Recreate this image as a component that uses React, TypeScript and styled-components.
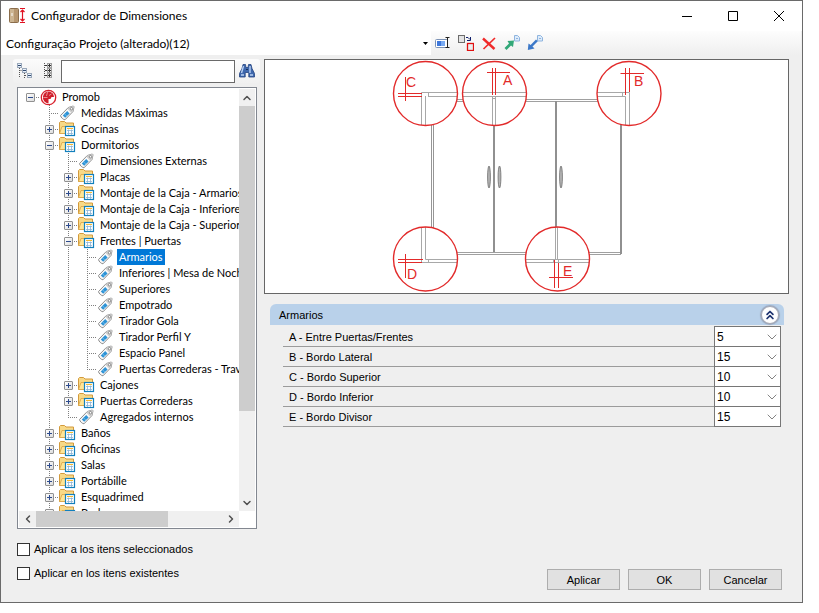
import React, { useState } from "react";
import styled, { createGlobalStyle, css } from "styled-components";
import { ChevronDown, ChevronLeft, ChevronRight, ChevronUp, ChevronsUp } from "lucide-react";

const GlobalStyle = createGlobalStyle`
  * { box-sizing: border-box; }
  body { margin: 0; background: #ffffff; }
  body, button, input, select { font-family: "Liberation Sans", Arial, sans-serif; font-size: 11px; color: #000000; }
  button { cursor: default; }
`;

/* ---------- window frame ---------- */

const Window = styled.div`
  display: flex;
  flex-direction: column;
  height: calc(100vh - 10px);
  min-height: 420px;
  margin-right: 16px;
  border: 1px solid #6a6a6a;
  background: #efefef;
`;

const TitleBar = styled.header`
  display: flex;
  align-items: center;
  height: 30px;
  padding-left: 8px;
  background: #ffffff;
`;

const Title = styled.h1`
  flex: 1;
  margin: 0 0 0 5px;
  font: 400 12px/16px Lato, "Noto Sans", sans-serif;
`;

const CaptionButton = styled.button`
  display: grid;
  place-items: center;
  width: 46px;
  height: 28px;
  padding: 0;
  border: 0;
  background: transparent;
`;

const TopBar = styled.div`
  display: flex;
  align-items: center;
  height: 24px;
  margin-right: 1px;
  background: linear-gradient(#fdfdfd, #efefef);
`;

const ProfileBox = styled.div`
  display: grid;
  flex: 0 0 430px;
  align-items: center;
  height: 24px;
  background: #ffffff;
  > * { grid-area: 1 / 1; }
  > svg { justify-self: end; margin-right: 3px; pointer-events: none; }
`;

const ProfileSelect = styled.select`
  width: 100%;
  height: 24px;
  padding: 0 5px;
  border: 0;
  appearance: none;
  background: transparent;
  font-family: Lato, "Noto Sans", sans-serif;
  font-size: 12px;
`;

const ToolButton = styled.button`
  display: grid;
  place-items: center;
  width: 23px;
  height: 22px;
  padding: 0;
  border: 0;
  background: transparent;
`;

const Body = styled.main`
  display: flex;
  flex: 1;
  min-height: 0;
  padding-top: 4px;
`;

/* ---------- left side ---------- */

const Side = styled.section`
  display: flex;
  flex: 0 0 259px;
  flex-direction: column;
  min-height: 0;
  padding-left: 12px;
`;

const SearchBar = styled.div`
  display: flex;
  align-items: center;
  height: 24px;
  padding-right: 2px;
  background: linear-gradient(#fbfbfb, #f0f0f0);
  border-radius: 3px;
`;

const SearchInput = styled.input`
  flex: 1;
  min-width: 0;
  height: 23px;
  margin-left: 2px;
  border: 1px solid #6a6a6a;
  background: #ffffff;
`;

const TreeBox = styled.div`
  display: grid;
  flex: 1;
  grid-template: minmax(0, 1fr) 16px / minmax(0, 1fr) 16px;
  min-height: 0;
  margin: 4px 3px 8px 4px;
  padding: 1px;
  border: 1px solid #828790;
  background: #ffffff;
`;

const TreeList = styled.ul`
  margin: 0;
  padding: 0 0 0 2px;
  overflow: hidden;
  list-style: none;
`;

const TreeRow = styled.li`
  display: flex;
  height: 16px;
`;

type Guide = "none" | "through" | "tee" | "end" | "stub";

const dotsDown = "repeating-linear-gradient(to bottom, #808080 0 1px, transparent 1px 2px)";
const dotsAcross = "repeating-linear-gradient(to right, #808080 0 1px, transparent 1px 2px)";

const guideStyles = {
  none: css``,
  through: css`background: ${dotsDown} 9px 0 / 1px 16px no-repeat;`,
  tee: css`background: ${dotsDown} 9px 0 / 1px 16px no-repeat, ${dotsAcross} 9px 8px / 10px 1px no-repeat;`,
  end: css`background: ${dotsDown} 9px 0 / 1px 9px no-repeat, ${dotsAcross} 9px 8px / 10px 1px no-repeat;`,
  stub: css`background: ${dotsAcross} 9px 8px / 10px 1px no-repeat;`,
};

const GuideCell = styled.span<{ $guide: Guide }>`
  display: grid;
  flex: 0 0 19px;
  place-items: center;
  height: 16px;
  ${({ $guide }) => guideStyles[$guide]}
`;

const Expander = styled.button`
  display: grid;
  place-items: center;
  width: 9px;
  height: 9px;
  margin-top: 1px;
  padding: 0;
  border: 1px solid #919191;
  border-radius: 1px;
  background: linear-gradient(135deg, #ffffff, #dcdcdc);
`;

const IconCell = styled.span`
  display: grid;
  flex: 0 0 20px;
  align-items: center;
  justify-items: start;
  height: 16px;
`;

const NodeLabel = styled.button<{ $selected: boolean }>`
  height: 16px;
  padding: 0 2px;
  border: 0;
  font-family: Lato, "Liberation Sans", sans-serif;
  font-size: 11px;
  line-height: 16px;
  white-space: nowrap;
  background: ${({ $selected }) => ($selected ? "#0078d7" : "transparent")};
  color: ${({ $selected }) => ($selected ? "#ffffff" : "#000000")};
`;

const ScrollTrack = styled.div<{ $vertical?: boolean }>`
  display: flex;
  flex-direction: ${({ $vertical }) => ($vertical ? "column" : "row")};
  background: #f0f0f0;
`;

const ScrollArrow = styled.button`
  display: grid;
  flex: 0 0 17px;
  place-items: center;
  padding: 0;
  border: 0;
  background: transparent;
  color: #505050;
`;

const ScrollLane = styled.div<{ $vertical?: boolean }>`
  flex: 1;
  display: grid;
  grid-template: ${({ $vertical }) => ($vertical ? "305fr 83fr / 1fr" : "1fr / 71fr 29fr")};
`;

const ScrollThumb = styled.div`
  background: #cdcdcd;
`;

const CheckRow = styled.label`
  display: flex;
  align-items: center;
  gap: 4px;
  height: 24px;
  margin-left: 4px;
`;

const CheckBox = styled.input`
  appearance: none;
  width: 13px;
  height: 13px;
  margin: 0;
  border: 1px solid #333333;
  background: #ffffff;
  &:checked { background: #0078d7; }
`;

const SideFoot = styled.div`
  padding-bottom: 17px;
`;

/* ---------- right side ---------- */

const Detail = styled.section`
  display: flex;
  flex: 1;
  flex-direction: column;
  min-width: 0;
  padding: 0 13px 12px 4px;
`;

const Preview = styled.div`
  display: grid;
  justify-items: center;
  border: 1px solid #666666;
  background: #ffffff;
`;

const GroupHeader = styled.div`
  display: flex;
  align-items: center;
  justify-content: space-between;
  height: 21px;
  margin: 10px 5px 2px 6px;
  padding: 0 5px 0 9px;
  border-radius: 6px 6px 0 0;
  background: #b9d1ea;
`;

const GroupTitle = styled.h2`
  margin: 0;
  font-size: 11px;
  font-weight: 400;
`;

const CollapseButton = styled.button`
  display: grid;
  place-items: center;
  width: 18px;
  height: 18px;
  padding: 0;
  border: 1px solid #a5a8b4;
  border-radius: 50%;
  background: #ffffff;
  box-shadow: 0 0 1px 1px #9aa7bd;
  color: #1f3470;
`;

const Fields = styled.div`
  margin: 0 8px 0 19px;
`;

const FieldRow = styled.div`
  display: flex;
  height: 20px;
`;

const FieldLabel = styled.label`
  flex: 1;
  padding-left: 6px;
  border-bottom: 1px solid #9b9b9b;
  line-height: 20px;
`;

const ValueBox = styled.div`
  display: grid;
  flex: 0 0 67px;
  align-items: center;
  height: 21px;
  margin-top: -1px;
  > * { grid-area: 1 / 1; }
  > svg { justify-self: end; margin-right: 1px; color: #444444; pointer-events: none; }
`;

const ValueSelect = styled.select`
  width: 100%;
  height: 21px;
  padding: 0 2px;
  border: 1px solid #767676;
  border-radius: 0;
  appearance: none;
  background: #ffffff;
  font-size: 12px;
`;

const Actions = styled.div`
  display: flex;
  justify-content: flex-end;
  gap: 8px;
  margin: auto 7px 0 0;
`;

const ActionButton = styled.button`
  width: 73px;
  height: 21px;
  padding: 0;
  border: 1px solid #adadad;
  background: #e1e1e1;
`;

/* ---------- icons ---------- */

const AppIcon = () => (
  <svg width="17" height="16" viewBox="0 0 17 16" aria-hidden="true">
    <rect x="0.5" y="0.5" width="9" height="14" rx="1" fill="#b79871" stroke="#8a6d4b" />
    <rect x="1" y="1" width="4" height="13" fill="#ccb592" />
    <path d="M3 5v3" stroke="#ffffff" />
    <path d="M11 .5h5M11 14.5h5M13.5 2v11M11.5 4l2-2 2 2M11.5 11l2 2 2-2" fill="none" stroke="#e01020" strokeWidth="1.2" />
  </svg>
);

const RenameIcon = () => (
  <svg width="16" height="14" viewBox="0 0 16 14" aria-hidden="true">
    <rect x=".5" y="3.5" width="12" height="8" rx="1" fill="#ffffff" stroke="#7d93b5" />
    <path d="M2 5h8v5H2z" fill="#78aaf2" />
    <path d="M2 5h4v5H2z" fill="#3f78dc" />
    <path d="M10.500 1.500h4M12.500 2v9M10.500 11.500h4" fill="none" stroke="#222222" />
  </svg>
);

const ReplaceIcon = () => (
  <svg width="16" height="16" viewBox="0 0 16 16" aria-hidden="true">
    <rect x=".5" y=".5" width="6" height="7" fill="#e4e4e4" stroke="#6c6c6c" />
    <rect x="9.500" y="8.500" width="6" height="7" fill="#e9f0f0" stroke="#e01010" strokeWidth="1.300" />
    <path d="M8 2.500h2l2 2M12.500 2v3.500H9" fill="none" stroke="#10206c" />
  </svg>
);

const DeleteIcon = () => (
  <svg width="14" height="13" viewBox="0 0 14 13" aria-hidden="true">
    <path d="M1 1.500 12.500 12" stroke="#f02a2a" strokeWidth="2.400" />
    <path d="M13 1 1.500 12" stroke="#f02a2a" strokeWidth="1.700" />
  </svg>
);

const TransferIcon = ({ outward }: { outward: boolean }) => (
  <svg width="16" height="16" viewBox="0 0 16 16" aria-hidden="true">
    <path d="M10.500 .5h3l2 2v3.500h-5z" fill="#dcebfb" stroke="#8fb4de" />
    <path d="M12 3.500h2" stroke="#8fb4de" />
    {outward ? (
      <path d="M.5 13 5 8.500 3.500 6l6.500-.500-1 6.500-2-1.500L2.500 15z" fill="#32a878" />
    ) : (
      <path d="M9 4.500 10.800 6.300 5.500 11.500 7.500 13.500 .8 15 1.500 8.500 3.600 10z" fill="#3c78c8" />
    )}
  </svg>
);

const TreeCollapseIcon = () => (
  <svg width="16" height="16" viewBox="0 0 16 16" aria-hidden="true">
    <path d="M2.500 5v10M2.500 7.500h3M7.500 10v5M8 12.500h3" stroke="#555555" strokeDasharray="1 1" />
    <g fill="#e7f0fa" stroke="#9aa8ba">
      <rect x=".5" y=".5" width="4" height="4" />
      <rect x="5.500" y="5.500" width="4" height="4" />
      <rect x="10.500" y="10.500" width="4" height="4" />
    </g>
    <path d="M1 2.500h3M6 7.500h3M11 12.500h3" stroke="#304a70" />
  </svg>
);

const TreeExpandIcon = () => (
  <svg width="10" height="16" viewBox="0 0 10 16" aria-hidden="true">
    <path d="M1.500 0v16M6.500 0v16" stroke="#555555" strokeDasharray="1 1" />
    {[0, 5, 10].map((y) => (
      <g key={y}>
        <rect x="4.500" y={y + 0.5} width="4" height="4" fill="#eeeeee" stroke="#a0a0a0" />
        <path d={`M5 ${y + 2.5}h3M6.500 ${y + 1}v3M2 ${y + 2.5}h2`} stroke="#333333" />
      </g>
    ))}
  </svg>
);

const BinocularsIcon = () => (
  <svg width="16" height="14" viewBox="0 0 16 14" aria-hidden="true">
    <path d="M4 .5h2.500l.5 3h2l.5-3H12l1 4 2.500 5v3.500H9.800V8.500H6.200V13H.5V9.500L3 4.500z" fill="#3f68ad" stroke="#244480" strokeWidth=".8" />
    <path d="M4.500 2 2.500 9M11 2v7M2 11h3M11 11h3" stroke="#b8d0f2" strokeWidth="1.400" />
    <path d="M7 5.500h2" stroke="#16305f" />
  </svg>
);

const PromobIcon = () => (
  <svg width="17" height="17" viewBox="0 0 17 17" aria-hidden="true">
    <circle cx="8.500" cy="8.500" r="7.200" fill="#ffffff" stroke="#d8202c" strokeWidth="1.300" />
    <path d="M9 2.500a6 6 0 0 1 5 5.500h-2.500l-1 2H8.500v4.500a6 6 0 0 1-5.500-7A6.200 6.200 0 0 1 9 2.500z" fill="#cf1f2c" />
    <path d="M7.500 3 6.500 7M3.500 8.500h4M9 6.500l2.500-1.500" stroke="#f3a8ac" strokeWidth=".8" />
  </svg>
);

const TagIcon = () => (
  <svg width="17" height="16" viewBox="0 0 17 16" aria-hidden="true">
    <path d="M1.500 10.500 9.300 2.500 14.300 1l.7.8-1 4.700-8 8.300c-1.500 0-4.300-2.300-4.500-4.300z" fill="#f8f8f8" stroke="#8c8c8c" />
    <path d="m10 2.300 4.300-1.300.7.800-1 4.700-1.500 1.500-4-4.300z" fill="#cdcdcd" />
    <circle cx="12.500" cy="3.700" r="1.200" fill="#ffffff" stroke="#777777" strokeWidth=".8" />
    <path d="m3.800 10.500 4.400-4.400 2.400 2.300-4.400 4.400z" fill="#2d93d6" />
    <path d="m5.500 8.800 2.400 2.400" stroke="#8cc8ee" strokeWidth=".7" />
  </svg>
);

const FolderIcon = () => (
  <svg width="17" height="16" viewBox="0 0 17 16" aria-hidden="true">
    <path d="M.5 12.500V1.500l1-1h4l1.500 1.500h7.500v10.500z" fill="#f8d987" stroke="#d39a3c" />
    <path d="M.5 12.500 3 5.500h11.500v7z" fill="#ffe596" stroke="#d8a548" strokeWidth=".8" />
    <rect x="6.500" y="5.500" width="9" height="9" fill="#ffffff" stroke="#1380bd" strokeWidth="1.200" />
    <path d="M8 7.500h6" stroke="#f5b82e" />
    <path d="M8 9.500h6M8 12.500h6M9.500 8.500v5.500M12.500 8.500v5.500" stroke="#8db4d4" strokeWidth=".8" />
  </svg>
);

const ExpandSign = ({ open }: { open: boolean }) => (
  <svg width="7" height="7" viewBox="0 0 7 7" aria-hidden="true">
    <path d={open ? "M1 3.500h5" : "M1 3.500h5M3.500 1v5"} stroke="#2c4a8c" />
  </svg>
);

/* ---------- wardrobe drawing ---------- */

const RED = "#e22a2a";

const callouts = [
  { x: 425.5, y: 93.5 },
  { x: 494.5, y: 93.5 },
  { x: 629, y: 93.5 },
  { x: 425.5, y: 259 },
  { x: 557.5, y: 259 },
];

const calloutLetters = [
  { text: "C", x: 406, y: 87 },
  { text: "A", x: 503, y: 85 },
  { text: "B", x: 634, y: 86 },
  { text: "D", x: 407, y: 279 },
  { text: "E", x: 563, y: 276 },
];

const WardrobeDrawing = () => (
  <svg width="271" height="233" viewBox="391 60 271 233" role="img" aria-label="Armario">
    <g fill="none">
      <path d="M430 99.500H622M430 101.500H622M430 252.500H621M430 254.500H621" stroke="#a0a0a0" />
      <path d="M431.500 101V253M433.500 101V253" stroke="#969696" />
      <path d="M494 101V252M556 101V252M621 101V254" stroke="#909090" strokeWidth="2" />
    </g>
    <g fill="#b5b5b5" stroke="#6c6c6c" strokeWidth=".8">
      <ellipse cx="489" cy="177" rx="1.400" ry="11" />
      <ellipse cx="499.500" cy="177" rx="1.400" ry="11" />
      <ellipse cx="561" cy="177" rx="1.400" ry="11" />
    </g>
    <g fill="#ffffff">
      {callouts.map((c) => (
        <circle key={`${c.x}-${c.y}`} cx={c.x} cy={c.y} r="32" />
      ))}
    </g>
    <g fill="none" stroke="#a8a8a8">
      <path d="M457 92.500H421.500V125M457 96.500H428M425.500 96V125M428.500 93v3" />
      <path d="M462.500 92.500H526.500M462.500 96.500H526.500M492.500 97v28M495.500 97v28M492.500 98.500h3" />
      <path d="M597 92.500H629.500V125M597 96.500H625.500V125M622.500 93v3" />
      <path d="M421.500 227V262.500H457M425.500 227V259.500H457M428.500 260v3" />
      <path d="M526 259.500H589.500M526 262.500H589.500M555.500 227V259M557.500 227V259M553.500 260v3M558.500 260v3" />
    </g>
    <g fill="none" stroke={RED}>
      <path d="M398 93.500H422M398 96.500H422M405.500 77V101" />
      <path d="M492.500 68V95M495.500 68V95M487 72.500H510" />
      <path d="M625.500 68V95M629.500 68V92M620.500 73.500H644" />
      <path d="M398 259.500H423M398 262.500H422M405.500 254V278" />
      <path d="M554.500 260V288M558.500 263V288M549 277.500H573" />
    </g>
    <g fill="none" stroke={RED} strokeWidth="1.400">
      {callouts.map((c) => (
        <circle key={`${c.x}-${c.y}`} cx={c.x} cy={c.y} r="32" />
      ))}
    </g>
    <g fill={RED} fontFamily="Liberation Sans, Arial, sans-serif" fontSize="14">
      {calloutLetters.map((l) => (
        <text key={l.text} x={l.x} y={l.y}>{l.text}</text>
      ))}
    </g>
  </svg>
);

/* ---------- data ---------- */

type Node = { label: string; guides: Guide[]; kind: "root" | "tag" | "folder"; open?: boolean };

const nodes: Node[] = [
  { label: "Promob", guides: ["stub"], kind: "root", open: true },
  { label: "Medidas Máximas", guides: ["none", "tee"], kind: "tag" },
  { label: "Cocinas", guides: ["none", "tee"], kind: "folder" },
  { label: "Dormitorios", guides: ["none", "tee"], kind: "folder", open: true },
  { label: "Dimensiones Externas", guides: ["none", "through", "tee"], kind: "tag" },
  { label: "Placas", guides: ["none", "through", "tee"], kind: "folder" },
  { label: "Montaje de la Caja - Armarios", guides: ["none", "through", "tee"], kind: "folder" },
  { label: "Montaje de la Caja - Inferiores", guides: ["none", "through", "tee"], kind: "folder" },
  { label: "Montaje de la Caja - Superior", guides: ["none", "through", "tee"], kind: "folder" },
  { label: "Frentes | Puertas", guides: ["none", "through", "tee"], kind: "folder", open: true },
  { label: "Armarios", guides: ["none", "through", "through", "tee"], kind: "tag" },
  { label: "Inferiores | Mesa de Noche", guides: ["none", "through", "through", "tee"], kind: "tag" },
  { label: "Superiores", guides: ["none", "through", "through", "tee"], kind: "tag" },
  { label: "Empotrado", guides: ["none", "through", "through", "tee"], kind: "tag" },
  { label: "Tirador Gola", guides: ["none", "through", "through", "tee"], kind: "tag" },
  { label: "Tirador Perfil Y", guides: ["none", "through", "through", "tee"], kind: "tag" },
  { label: "Espacio Panel", guides: ["none", "through", "through", "tee"], kind: "tag" },
  { label: "Puertas Correderas - Trav", guides: ["none", "through", "through", "end"], kind: "tag" },
  { label: "Cajones", guides: ["none", "through", "tee"], kind: "folder" },
  { label: "Puertas Correderas", guides: ["none", "through", "tee"], kind: "folder" },
  { label: "Agregados internos", guides: ["none", "through", "end"], kind: "tag" },
  { label: "Baños", guides: ["none", "tee"], kind: "folder" },
  { label: "Oficinas", guides: ["none", "tee"], kind: "folder" },
  { label: "Salas", guides: ["none", "tee"], kind: "folder" },
  { label: "Portábille", guides: ["none", "tee"], kind: "folder" },
  { label: "Esquadrimed", guides: ["none", "tee"], kind: "folder" },
  { label: "Bodegas", guides: ["none", "tee"], kind: "folder" },
];

const fields = [
  { id: "a", label: "A - Entre Puertas/Frentes", value: "5" },
  { id: "b", label: "B - Bordo Lateral", value: "15" },
  { id: "c", label: "C - Bordo Superior", value: "10" },
  { id: "d", label: "D - Bordo Inferior", value: "10" },
  { id: "e", label: "E - Bordo Divisor", value: "15" },
];

const nodeIcons = { root: PromobIcon, tag: TagIcon, folder: FolderIcon };

export default function App() {
  const [selected, setSelected] = useState("Armarios");
  const [collapsed, setCollapsed] = useState(false);

  return (
    <>
      <GlobalStyle />
      <Window>
        <TitleBar>
          <AppIcon />
          <Title>Configurador de Dimensiones</Title>
          <CaptionButton aria-label="Minimizar">
            <svg width="10" height="10" viewBox="0 0 10 10"><path d="M0 5.500h10" stroke="#000000" /></svg>
          </CaptionButton>
          <CaptionButton aria-label="Maximizar">
            <svg width="10" height="10" viewBox="0 0 10 10"><path d="M.5.5h9v9h-9z" fill="none" stroke="#000000" /></svg>
          </CaptionButton>
          <CaptionButton aria-label="Cerrar">
            <svg width="10" height="10" viewBox="0 0 10 10"><path d="m0 0 10 10M10 0 0 10" stroke="#000000" /></svg>
          </CaptionButton>
        </TitleBar>

        <TopBar>
          <ProfileBox>
            <ProfileSelect aria-label="Configuración">
              <option>Configuração Projeto (alterado)(12)</option>
            </ProfileSelect>
            <svg width="5" height="3" viewBox="0 0 5 3"><path d="M0 0h5L2.500 3z" /></svg>
          </ProfileBox>
          <ToolButton aria-label="Renombrar"><RenameIcon /></ToolButton>
          <ToolButton aria-label="Sustituir"><ReplaceIcon /></ToolButton>
          <ToolButton aria-label="Eliminar"><DeleteIcon /></ToolButton>
          <ToolButton aria-label="Exportar"><TransferIcon outward /></ToolButton>
          <ToolButton aria-label="Importar"><TransferIcon outward={false} /></ToolButton>
        </TopBar>

        <Body>
          <Side>
            <SearchBar>
              <ToolButton aria-label="Contraer todo"><TreeCollapseIcon /></ToolButton>
              <ToolButton aria-label="Expandir todo"><TreeExpandIcon /></ToolButton>
              <SearchInput aria-label="Buscar" />
              <ToolButton aria-label="Buscar siguiente"><BinocularsIcon /></ToolButton>
            </SearchBar>

            <TreeBox>
              <TreeList>
                {nodes.map((node) => {
                  const Icon = nodeIcons[node.kind];
                  return (
                    <TreeRow key={node.label}>
                      {node.guides.map((guide, level) => (
                        <GuideCell key={level} $guide={guide}>
                          {level === node.guides.length - 1 && node.kind !== "tag" && (
                            <Expander aria-label={node.label} aria-expanded={!!node.open}>
                              <ExpandSign open={!!node.open} />
                            </Expander>
                          )}
                        </GuideCell>
                      ))}
                      <IconCell><Icon /></IconCell>
                      <NodeLabel $selected={selected === node.label} onClick={() => setSelected(node.label)}>
                        {node.label}
                      </NodeLabel>
                    </TreeRow>
                  );
                })}
              </TreeList>
              <ScrollTrack $vertical>
                <ScrollArrow aria-label="Subir"><ChevronUp size={12} strokeWidth={3} /></ScrollArrow>
                <ScrollLane $vertical><ScrollThumb /></ScrollLane>
                <ScrollArrow aria-label="Bajar"><ChevronDown size={12} strokeWidth={3} /></ScrollArrow>
              </ScrollTrack>
              <ScrollTrack>
                <ScrollArrow aria-label="Izquierda"><ChevronLeft size={12} strokeWidth={3} /></ScrollArrow>
                <ScrollLane><ScrollThumb /></ScrollLane>
                <ScrollArrow aria-label="Derecha"><ChevronRight size={12} strokeWidth={3} /></ScrollArrow>
              </ScrollTrack>
            </TreeBox>

            <SideFoot>
              <CheckRow><CheckBox type="checkbox" />Aplicar a los itens seleccionados</CheckRow>
              <CheckRow><CheckBox type="checkbox" />Aplicar en los itens existentes</CheckRow>
            </SideFoot>
          </Side>

          <Detail>
            <Preview><WardrobeDrawing /></Preview>
            <GroupHeader>
              <GroupTitle>Armarios</GroupTitle>
              <CollapseButton aria-label="Contraer" onClick={() => setCollapsed(!collapsed)}>
                <ChevronsUp size={14} strokeWidth={3} />
              </CollapseButton>
            </GroupHeader>
            {!collapsed && (
              <Fields>
                {fields.map((field) => (
                  <FieldRow key={field.id}>
                    <FieldLabel htmlFor={field.id}>{field.label}</FieldLabel>
                    <ValueBox>
                      <ValueSelect id={field.id}><option>{field.value}</option></ValueSelect>
                      <ChevronDown size={16} strokeWidth={1} />
                    </ValueBox>
                  </FieldRow>
                ))}
              </Fields>
            )}
            <Actions>
              <ActionButton>Aplicar</ActionButton>
              <ActionButton>OK</ActionButton>
              <ActionButton>Cancelar</ActionButton>
            </Actions>
          </Detail>
        </Body>
      </Window>
    </>
  );
}
